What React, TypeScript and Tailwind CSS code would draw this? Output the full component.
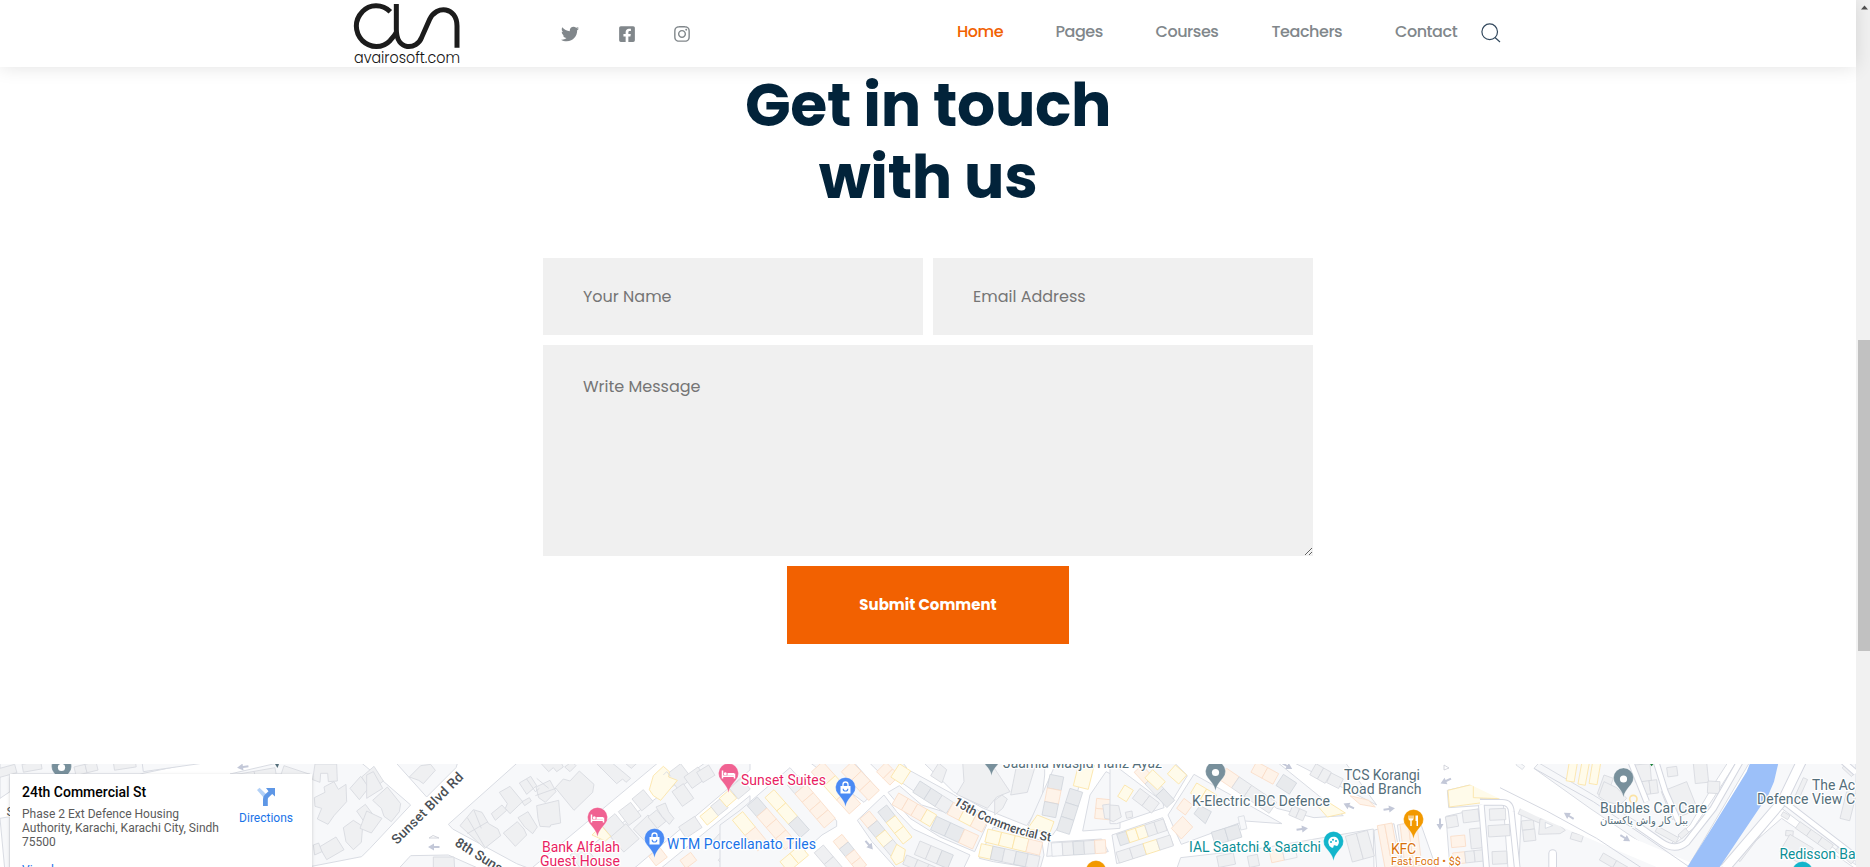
import React from "react";
import { FaTwitter, FaFacebookSquare, FaInstagram } from "react-icons/fa";

const tones: Record<string, [string, string]> = {
  g: ["#eff0f2", "#d6d9de"],
  b: ["#e8eaed", "#d0d5dc"],
  o: ["#fef3e9", "#fadcc6"],
  y: ["#fffbea", "#fbe3a4"],
  w: ["#f7f8fa", "#d9dce2"],
};

type Row = [number, number, number, number, number, string];
type Shape = [string, string];
type Tile = { x: number; blocks: string[]; rows: Row[]; shapes: Shape[] };

const tiles: Tile[] = [
  {
    x: 0,
    blocks: [
      "0,20 135,20 600,20 420,57 0,57",
      "0,57 30,57 30,110 0,130",
      "0,190 30,185 30,340 14,340",
      "426,20 640,20 430,50",
      "690,57 850,20 1080,20 1140,70 1232,150 1110,280 1085,305 930,335 930,57",
    ],
    rows: [
      [-8, 42, 44, 28, 26, "g"],
      [66, 28, 122, 18, 24, "g"],
      [222, 36, 288, 20, 26, "gg"],
      [340, 22, 405, 12, 24, "g"],
      [700, 60, 825, 38, 20, "gg"],
      [852, 32, 930, 58, 30, "g"],
    ],
    shapes: [
      ["g", "945,27 1010,27 1012,78 985,80 983,55 962,55 960,82 938,74"],
      ["g", "943,128 975,112 972,96 1002,80 1015,103 1038,88 1040,140 1002,182 984,208 952,192 965,160 945,154"],
      ["g", "1050,100 1082,64 1108,96 1078,134"],
      ["g", "1085,66 1122,34 1150,78 1112,108"],
      ["g", "1030,218 1060,196 1088,214 1084,262 1060,284 1038,260"],
      ["g", "958,276 1008,246 1032,284 980,314"],
      ["g", "1070,168 1096,148 1120,180 1092,200"],
      ["g", "940,270 956,264 966,290 944,300"],
    ],
  },
  {
    x: 370,
    blocks: [
      "75,20 170,126 258,38 264,20",
      "446,20 235,208 248,222 440,326 482,342 868,20",
      "566,342 1010,20 1140,20 1140,45 790,342",
      "870,342 1140,122 1140,342",
      "85,342 122,302 235,300 330,342",
    ],
    rows: [
      [600, 300, 640, 268, 60, "g"],
      [694, 210, 735, 176, 52, "g"],
      [745, 170, 782, 142, 52, "g"],
      [786, 132, 820, 104, 46, "g"],
      [890, 58, 932, 26, 56, "g"],
      [942, 66, 984, 36, 42, "g"],
      [980, 52, 1016, 30, 36, "g"],
      [722, 246, 768, 206, 60, "g"],
      [790, 222, 834, 180, 48, "g"],
      [834, 186, 860, 165, 44, "g"],
      [906, 110, 940, 86, 54, "g"],
      [990, 184, 1024, 156, 34, "y"],
      [1022, 154, 1052, 130, 36, "g"],
      [1048, 130, 1078, 104, 34, "y"],
      [1078, 100, 1114, 70, 42, "g"],
      [926, 216, 974, 184, 40, "g"],
      [836, 304, 870, 278, 36, "o"],
      [930, 316, 962, 292, 30, "o"],
      [1048, 236, 1086, 270, 26, "g"],
      [1086, 196, 1122, 168, 46, "y"],
      [1070, 290, 1110, 330, 36, "go"],
    ],
    shapes: [
      ["g", "-10,60 10,50 38,100 -10,130"],
      ["g", "8,136 52,96 92,146 88,170 64,200 42,184 34,160"],
      ["g", "-10,168 36,190 4,234 -30,220"],
      ["g", "118,66 152,32 182,28 196,46 160,86 146,76"],
      ["g", "510,22 536,50 550,38 560,50 580,36 572,20"],
      ["g", "584,36 600,50 618,32 606,20"],
      ["g", "556,98 580,72 600,78 628,48 672,88 668,112 612,166"],
      ["g", "674,20 740,86 758,72 768,82 782,70 722,20"],
      ["g", "760,20 784,40 806,20"],
      ["g", "388,112 420,94 458,140 420,176 406,160 412,146"],
      ["g", "448,84 482,64 500,92 470,118"],
      ["g", "498,96 540,76 558,110 526,142 506,128"],
      ["g", "364,176 396,150 410,166 376,196"],
      ["g", "456,140 478,128 484,138 464,152"],
      ["g", "500,152 566,136 572,204 542,210 540,216 510,214 504,190"],
      ["g", "270,212 310,164 336,172 356,206 384,222 392,242 344,280"],
      ["g", "400,234 442,200 462,222 470,240 436,274"],
      ["g", "444,188 474,170 502,216 488,236 464,216"],
      ["y", "838,104 850,62 880,34 898,50 896,66 922,76 872,136 850,122"],
      ["g", "858,156 886,144 896,170 912,190 898,208 876,184"],
      ["y", "666,240 694,212 722,244 706,258"],
      ["g", "190,306 252,306 254,342 190,342"],
    ],
  },
  {
    x: 740,
    blocks: [
      "0,166 150,38 290,198 290,214 246,240 180,300 130,342 -60,342 -60,210",
      "206,20 372,142 412,102 340,20",
      "385,20 450,84 500,38 486,20",
      "352,196 432,120 470,170 520,222 690,300 670,342 470,342 396,260",
      "444,112 478,92 545,150 740,210 704,290 600,246 510,190",
      "484,82 512,48 640,118 736,180 752,206 640,180 544,124",
      "548,20 640,110 730,160 860,212 905,140 914,60 914,20",
      "718,310 760,216 905,256 912,300 900,342 760,320",
      "862,218 950,20 1040,20 1000,150 938,240",
      "926,262 1085,252 1105,290 920,304",
      "1028,228 1050,120 1098,50 1140,70 1140,220",
    ],
    rows: [
      [102, 104, 208, 224, 36, "yyb"],
      [176, 62, 286, 190, 44, "goooo"],
      [52, 126, 166, 258, 40, "booo"],
      [8, 170, 84, 262, 40, "yo"],
      [248, 20, 362, 146, 46, "oyo"],
      [336, 20, 418, 106, 44, "ooo"],
      [438, 22, 478, 62, 40, "oo"],
      [388, 168, 482, 282, 36, "obyg"],
      [440, 150, 516, 246, 34, "byy"],
      [250, 270, 310, 340, 36, "gg"],
      [306, 238, 380, 330, 34, "oboo"],
      [486, 88, 512, 48, -40, "y"],
      [540, 78, 640, 142, 40, "bbg"],
      [640, 142, 744, 196, 40, "oyo"],
      [476, 114, 590, 180, 40, "oooy"],
      [590, 184, 716, 242, 44, "bbo"],
      [744, 222, 908, 262, 40, "yyyo"],
      [724, 266, 900, 304, 40, "ybgbg"],
      [934, 264, 1096, 254, 40, "wgbgo"],
      [990, 100, 950, 226, -40, "bbb"],
      [930, 58, 906, 180, -42, "bob"],
      [1018, 20, 1000, 92, -46, "y"],
      [540, 258, 640, 300, 44, "ggb"],
      [500, 300, 600, 342, 30, "ggg"],
      [1070, 130, 1064, 190, -50, "oo"],
      [120, 320, 180, 270, 40, "yy"],
    ],
    shapes: [
      ["g", "668,20 750,20 810,110 770,126 742,160 650,118 672,80"],
      ["g", "830,30 890,20 862,112 812,120"],
      ["g", "764,136 786,120 802,132 788,160 764,180"],
      ["y", "862,222 892,180 942,200 930,232"],
      ["g", "572,62 596,24 620,44 606,84"],
      ["y", "452,306 470,268 496,284 490,318 468,330"],
      ["g", "1088,150 1120,146 1150,160 1130,196 1094,190"],
    ],
  },
  {
    x: 1110,
    blocks: [
      "0,20 158,140 162,158 20,206 0,206",
      "70,20 190,132 232,62 190,20",
      "252,58 174,180 214,268 404,198 516,206",
      "6,240 158,188 190,270 20,326",
      "318,20 500,160 612,188 700,182 500,20",
      "546,20 800,150 704,20",
      "200,342 212,308 440,282 790,222 792,342",
      "792,226 852,206 878,342 800,342",
      "862,210 930,200 980,342 880,342",
      "1008,184 1140,154 1140,342 1020,342",
      "1012,106 1140,76 1140,150 1016,158",
    ],
    rows: [
      [96, 30, 194, 136, 32, "ogb"],
      [128, 44, 166, 80, 34, "y"],
      [196, 30, 230, 60, 36, "y"],
      [44, 90, 70, 106, 40, "y"],
      [90, 100, 148, 144, 38, "gg"],
      [260, 84, 320, 120, 36, "yy"],
      [350, 40, 500, 142, 40, "oggg"],
      [440, 20, 506, 56, 36, "oo"],
      [520, 58, 560, 84, 40, "b"],
      [618, 26, 664, 52, 38, "gg"],
      [664, 54, 700, 72, 32, "g"],
      [20, 238, 160, 192, 36, "byygg"],
      [18, 292, 180, 240, 34, "ggyg"],
      [304, 232, 384, 208, 40, "bb"],
      [384, 186, 402, 182, 40, "w"],
      [320, 304, 370, 294, 34, "g"],
      [412, 304, 442, 298, 34, "g"],
      [478, 288, 554, 272, 36, "ow"],
      [706, 244, 772, 226, 80, "gg"],
      [802, 212, 846, 204, 130, "oo"],
      [870, 208, 920, 202, 130, "oo"],
      [1006, 186, 1040, 180, 34, "g"],
      [1056, 168, 1104, 162, 36, "g"],
      [1022, 244, 1064, 240, 34, "o"],
      [1028, 294, 1064, 290, 34, "o"],
      [1078, 222, 1118, 218, 60, "g"],
      [1064, 290, 1120, 284, 34, "gg"],
      [548, 152, 590, 170, 30, "gg"],
    ],
    shapes: [
      ["o", "200,160 222,130 248,150 226,180"],
      ["o", "184,220 218,184 248,216 214,252"],
      ["b", "252,176 270,152 304,170 286,206"],
      ["g", "0,150 26,152 34,186 10,200 0,196"],
      ["g", "46,172 66,168 68,186 50,190"],
      ["y", "604,132 640,132 706,174 652,186"],
      ["o", "720,122 776,136 796,156 750,148"],
      ["y", "1014,106 1080,90 1140,88 1140,140 1018,156"],
    ],
  },
  {
    x: 1480,
    blocks: [
      "162,40 180,20 470,20 490,140 560,230 590,262 640,220 700,130 770,20 810,20 620,342 600,342 330,160",
      "170,20 340,120 470,200 570,270 630,210 700,90 745,20",
      "0,60 90,130 0,130",
      "126,136 200,170 340,240 560,342 116,342",
      "8,150 70,148 84,342 10,342",
      "895,20 860,120 700,342 730,342 905,160 960,20",
      "980,20 905,160 1128,330 1128,20",
      "905,190 730,342 1128,342",
    ],
    rows: [
      [268, 20, 292, 24, 58, "y"],
      [306, 20, 328, 24, 68, "y"],
      [338, 20, 362, 24, 66, "y"],
      [372, 60, 400, 70, 60, "g"],
      [462, 30, 510, 26, 52, "g"],
      [484, 80, 530, 74, 40, "gg"],
      [560, 38, 590, 34, 28, "g"],
      [544, 110, 620, 80, 90, "g"],
      [640, 26, 680, 22, 60, "g"],
      [684, 78, 720, 80, 36, "g"],
      [28, 162, 76, 160, 34, "g"],
      [24, 212, 88, 208, 34, "g"],
      [36, 290, 80, 288, 38, "g"],
      [124, 198, 160, 194, 28, "g"],
      [128, 226, 164, 222, 34, "g"],
      [130, 140, 200, 170, 40, "g"],
      [276, 232, 310, 242, 20, "g"],
      [370, 294, 450, 340, 24, "gg"],
      [534, 214, 596, 248, 18, "g"],
      [594, 240, 616, 220, 16, "g"],
      [906, 156, 780, 320, 22, "gg"],
      [1100, 110, 1080, 190, -30, "g"],
      [960, 200, 1060, 270, 24, "ggg"],
      [910, 170, 930, 182, 14, "g"],
      [918, 226, 940, 228, 16, "g"],
      [930, 238, 1000, 280, 60, "g"],
      [970, 68, 942, 130, -14, "g"],
      [1100, 24, 1128, 50, 20, "g"],
      [1080, 270, 1128, 310, 22, "gg"],
      [115, 20, 134, 34, 12, "w"],
    ],
    shapes: [
      ["y", "-20,80 10,92 88,122 80,132 -20,128"],
      ["g", "180,192 214,190 256,226 240,236 176,238"],
      ["g", "356,124 372,80 410,98 440,130 420,150 380,140"],
    ],
  },
];

function rowPolys([x1, y1, x2, y2, depth, codes]: Row) {
  const len = Math.hypot(x2 - x1, y2 - y1);
  const nx = (-(y2 - y1) / len) * depth;
  const ny = ((x2 - x1) / len) * depth;
  const n = codes.length;
  return codes.split("").map((c, i) => {
    const ax = x1 + ((x2 - x1) * i) / n;
    const ay = y1 + ((y2 - y1) * i) / n;
    const bx = x1 + ((x2 - x1) * (i + 1)) / n;
    const by = y1 + ((y2 - y1) * (i + 1)) / n;
    return [c, `${ax},${ay} ${bx},${by} ${bx + nx},${by + ny} ${ax + nx},${ay + ny}`] as Shape;
  });
}

function Pin({ x, y, color, children }: { x: number; y: number; color: string; children?: React.ReactNode }) {
  return (
    <g transform={`translate(${x} ${y})`}>
      <path d="M0 0C-1-6-4-8.500-7.500-13A10 10 0 1 1 7.500-13C4-8.500 1-6 0 0Z" fill={color} stroke="#fff" strokeOpacity=".6" strokeWidth=".5" />
      <g transform="translate(0 -18.500)">{children ?? <circle r="3.600" fill="#fff" />}</g>
    </g>
  );
}

const Bag = () => (
  <g>
    <path d="M-5-2.500H5V5H-5Z" fill="#fff" />
    <path d="M-2.500-2.500V-4A2.500 2.500 0 0 1 2.500-4V-2.500" fill="none" stroke="#fff" strokeWidth="1.300" />
    <path d="M-2.300.2A2.300 2.300 0 0 0 2.300.2" fill="none" stroke="#4a8af4" strokeWidth="1.200" />
  </g>
);

const Bed = () => (
  <g fill="none" stroke="#fff" strokeWidth="1.500">
    <path d="M-6-4V4M-6 1.800H6M6 4V-1" />
    <path d="M-1-1.500H5.500V1H-1Z" fill="#fff" stroke="none" />
    <circle cx="-3.200" cy="-.8" r="1.500" fill="#fff" stroke="none" />
  </g>
);

const Arrow = ({ x, y, r }: { x: number; y: number; r: number }) => (
  <path transform={`translate(${x} ${y}) rotate(${r})`} d="M-5.500-1H0V-3.500L6 0 0 3.500V1H-5.500Z" fill="#c3c8d8" />
);

type LabelProps = { x: number; y: number; w?: number; color: string; size?: number; children: string; mid?: boolean };
const Label = ({ x, y, w, color, size = 14, children, mid }: LabelProps) => (
  <text
    x={x}
    y={y}
    fill={color}
    fontSize={size}
    textLength={w}
    textAnchor={mid ? "middle" : "start"}
    stroke="#fff"
    strokeWidth="2.500"
    strokeLinejoin="round"
    paintOrder="stroke"
  >
    {children}
  </text>
);

function MapView() {
  return (
    <svg viewBox="0 764 1856 103" className="block h-[103px] w-[1856px] font-['Roboto',sans-serif]" aria-label="Map">
      <rect x="0" y="764" width="1856" height="103" fill="#fff" />
      {tiles.map((t) => (
        <g key={t.x} transform={`translate(${t.x} 755) scale(.33333)`} strokeWidth="2.500">
          {t.blocks.map((p, i) => (
            <polygon key={i} points={p} fill="#f7f8fa" stroke="#d9dce3" strokeWidth="3" />
          ))}
          {[...t.rows.flatMap(rowPolys), ...t.shapes].map(([c, p], i) => (
            <polygon key={i} points={p} fill={tones[c][0]} stroke={tones[c][1]} />
          ))}
        </g>
      ))}

      <g transform="translate(370 755) scale(.33333)" fill="none" stroke="#d6d9de" strokeWidth="2.500">
        <path d="M292 188L344 276M312 166L334 220M292 236L354 200M470 72L496 110 508 100M500 70L536 100 M496 122L558 100M880 60L890 50 902 64" />
      </g>
      <g transform="translate(1480 755) scale(.33333)" fill="none">
        <path d="M-30 60L180 160 630 350" stroke="#fff" strokeWidth="52" />
        <path d="M60 98L200 168 350 250 490 342M162 40L340 140 500 248 625 334" stroke="#d4d7e0" strokeWidth="3" />
        <path d="M780 20L700 160 620 262Q585 290 545 262L470 210" stroke="#d4d7e0" strokeWidth="22" />
        <path d="M780 20L700 160 620 262Q585 290 545 262L470 210" stroke="#fff" strokeWidth="16" />
        <path d="M452 20L500 140M528 20L556 110 600 210" stroke="#d4d7e0" strokeWidth="20" />
        <path d="M452 20L500 140M528 20L556 110 600 210" stroke="#fff" strokeWidth="14" />
        <path d="M0 142H66Q92 142 94 170L112 342M4 150L20 342" stroke="#d4d7e0" strokeWidth="20" />
        <path d="M0 142H66Q92 142 94 170L112 342M4 150L20 342" stroke="#fff" strokeWidth="14" />
        <path d="M218 342V296" stroke="#d4d7e0" strokeWidth="26" strokeLinecap="round" />
        <path d="M218 342V296" stroke="#fff" strokeWidth="20" strokeLinecap="round" />
        <path d="M964 20L906 140 735 340" stroke="#d4d7e0" strokeWidth="32" />
        <path d="M964 20L906 140 735 340" stroke="#fff" strokeWidth="26" />
        <path d="M912 140L1128 306M1090 20L1128 54" stroke="#d4d7e0" strokeWidth="20" />
        <path d="M912 140L1128 306M1090 20L1128 54" stroke="#fff" strokeWidth="14" />
        <path d="M812 20H896L882 80 866 118 715 342H618L700 212 800 50Z" fill="#9cc0f9" />
        <circle cx="460" cy="132" r="11" stroke="#fbe3a4" strokeWidth="5" />
        <path d="M196 202L218 212 196 220Z" stroke="#cfd3dc" strokeWidth="2" fill="#fff" />
        <path d="M510 27H520L515 34Z" fill="#188038" />
      </g>

      <Arrow x={243} y={767} r={172} />
      <Arrow x={434} y={847} r={180} />
      <Arrow x={869} y={845} r={50} />
      <Arrow x={1287} y={766} r={30} />
      <Arrow x={1349} y={806} r={205} />
      <Arrow x={1389} y={809} r={-8} />
      <Arrow x={1302} y={829} r={-8} />
      <Arrow x={1446} y={781} r={155} />
      <Arrow x={1440} y={824} r={90} />
      <Arrow x={1569} y={816} r={212} />
      <Arrow x={1625} y={838} r={32} />
      <path d="M429 838L433 835.500 439 838ZM1444 765L1449 768 1444 770Z" fill="#fff" stroke="#c9ccd4" strokeWidth=".8" />
      <path d="M275 764H279L277.500 768Z" fill="#546e7a" />

      <Pin x={61.500} y={786} color="#78909c" />
      <Pin x={991.500} y={776} color="#78909c" />
      <Pin x={1215.500} y={791} color="#78909c" />
      <Pin x={1623.500} y={797.500} color="#78909c" />
      <Pin x={728.500} y={793} color="#f06292"><Bed /></Pin>
      <Pin x={597.500} y={837} color="#f06292"><Bed /></Pin>
      <Pin x={845.500} y={807} color="#4a8af4"><Bag /></Pin>
      <Pin x={654.500} y={858} color="#4a8af4"><Bag /></Pin>
      <Pin x={1333.500} y={861} color="#12b5cb">
        <path d="M-5 1A5.300 5.300 0 1 1 4.500 2.500Q3.800 4 2 3 0 2 0 4 0 6-2 5A5 5 0 0 1-5 1" fill="#fff" />
        <g fill="#12b5cb"><circle cx="-2.500" cy="-.5" r="1" /><circle cx="-.5" cy="-2.800" r="1" /><circle cx="2.500" cy="-1.600" r="1" /></g>
      </Pin>
      <Pin x={1413.500} y={839} color="#f29900">
        <path d="M-5-5V-1.500Q-5 0-3.200 0V5.500H-1.800V0Q0 0 0-1.500V-5H-1V-2H-2V-5H-3V-2H-4V-5ZM2-5H4.500V5.500H3V.5H2Z" fill="#fff" />
      </Pin>
      <Pin x={1096} y={890} color="#f29900" />
      <Pin x={1802.500} y={891} color="#12b5cb" />

      <g stroke="#fff" strokeWidth="2.500" strokeLinejoin="round" paintOrder="stroke" fill="#4a4f55" fontWeight="500">
        <text transform="translate(397 845) rotate(-45)" fontSize="13.500" textLength="95" paintOrder="stroke">Sunset Blvd Rd</text>
        <text transform="translate(454 845) rotate(32)" fontSize="13.500" paintOrder="stroke">8th Sunset St</text>
        <path id="st15" d="M953 804Q1000 834 1053 842" fill="none" stroke="none" />
        <text fontSize="12.500" paintOrder="stroke"><textPath href="#st15" textLength="105">15th Commercial St</textPath></text>
        <text x="6.500" y="816" fontSize="13" fontWeight="400" paintOrder="stroke">S</text>
      </g>

      <Label x={741} y={784.500} w={85} color="#e91e63">Sunset Suites</Label>
      <Label x={581} y={852} w={78} color="#e91e63" mid>Bank Alfalah</Label>
      <Label x={580} y={866} w={80} color="#e91e63" mid>Guest House</Label>
      <Label x={667} y={849} w={149} color="#1a73e8">WTM Porcellanato Tiles</Label>
      <Label x={1003} y={767.500} w={159} color="#546e7a">Jaamia Masjid Hafiz Ayaz</Label>
      <Label x={1192} y={806} w={138} color="#546e7a">K-Electric IBC Defence</Label>
      <Label x={1382} y={780} w={76} color="#546e7a" mid>TCS Korangi</Label>
      <Label x={1382} y={794} w={79} color="#546e7a" mid>Road Branch</Label>
      <Label x={1189} y={852} w={132} color="#0b8f96">IAL Saatchi &amp; Saatchi</Label>
      <Label x={1391} y={854} w={25} color="#d9730d">KFC</Label>
      <Label x={1391} y={865} w={70} size={11} color="#d9730d">Fast Food • $$</Label>
      <Label x={1600} y={813} w={107} color="#546e7a">Bubbles Car Care</Label>
      <text x="1644" y="824" fontSize="10.500" fill="#546e7a" textAnchor="middle" direction="rtl" textLength="88" lengthAdjust="spacingAndGlyphs" stroke="#fff" strokeWidth="2" paintOrder="stroke" fontFamily="DejaVu Sans">ببل كار واش پاكستان</text>
      <Label x={1812} y={790} w={43} color="#546e7a">The Ac</Label>
      <Label x={1757} y={804} w={98} color="#546e7a">Defence View C</Label>
      <Label x={1779.500} y={859} w={76} color="#0b8f96">Redisson Ba</Label>
    </svg>
  );
}

function PlaceCard() {
  return (
    <div className="absolute left-[10px] top-[10px] flex h-[110px] w-[302px] justify-between bg-white pl-3 pr-[19px] pt-[9px] font-['Roboto',sans-serif] shadow-[0_1px_4px_-1px_rgba(0,0,0,0.3)]">
      <div className="w-[205px]">
        <div className="text-[14px] font-medium leading-[18px] text-black">24th Commercial St</div>
        <div className="mt-[6px] text-[12px] leading-[14px] text-[#5b5b5b]">
          Phase 2 Ext Defence Housing
          <br />
          Authority, Karachi, Karachi City, Sindh
          <br />
          75500
        </div>
        <div className="mt-[14px] text-[12px] leading-[14px] text-[#1a73e8]">View larger map</div>
      </div>
      <div className="flex flex-col items-center pt-[4px]">
        <svg viewBox="0 0 20 20" className="size-5">
          <path d="M1 3L3.500.8 10.500 7.500 8 11Z" fill="#b3d1f7" />
          <path d="M7 19V12Q7 9.500 8.800 7.800L12.500 4.200 10 1H19V9.500L16.200 7 12.500 10.500Q11.800 11.200 11.800 12.500V19Z" fill="#5e97e6" />
        </svg>
        <span className="mt-[4px] text-[12px] leading-[14px] text-[#1a73e8]">Directions</span>
      </div>
    </div>
  );
}

function Logo() {
  return (
    <div className="flex h-[67px] w-[108px] flex-col pt-px">
      <svg viewBox="70 3 324 147" className="h-[49px] w-[108px] shrink-0" fill="none" stroke="#1c1c1c" strokeWidth="15">
        <path d="M182 35C157 10 119 12 98 35C74 60 74 96 98 122C122 145 158 146 181 122Q199 101 200 96" />
        <path d="M200 12V88C200 155 262 150 276 112L300 58C320 14 382 20 382 78V143" />
      </svg>
      <svg viewBox="0 0 108 17" className="h-[17px] w-[108px] shrink-0 overflow-visible">
        <text x="1" y="13.300" fontSize="16" textLength="106" lengthAdjust="spacingAndGlyphs" fill="#111" className="font-['Poppins','Lato',sans-serif] font-light">avairosoft.com</text>
      </svg>
    </div>
  );
}

function Header() {
  return (
    <header className="relative z-10 flex h-[67px] w-full bg-white pl-[353px] shadow-[0_0_18px_rgba(0,0,0,0.12)]">
      <Logo />
      <div className="ml-[100px] flex items-start gap-[39px] pt-[25px] text-[18px] text-[#81878b]">
        <FaTwitter />
        <FaFacebookSquare />
        <FaInstagram className="-ml-[2px]" />
      </div>
      <nav className="ml-[266px] flex pt-[20px] text-[16px] font-medium leading-6 tracking-[-0.45px] text-[#81878b]">
        <a className="w-[98.500px] text-[#f16101]">Home</a>
        <a className="w-[100px]">Pages</a>
        <a className="w-[116px]">Courses</a>
        <a className="w-[123.500px]">Teachers</a>
        <a className="w-[86px]">Contact</a>
      </nav>
      <svg viewBox="0 0 20 20" className="mt-[23px] size-5" fill="none" stroke="#33495e" strokeWidth="1.200">
        <ellipse cx="8.700" cy="8.800" rx="7.800" ry="7.900" />
        <path d="M14 14.500L19 19" />
      </svg>
    </header>
  );
}

export default function App() {
  return (
    <div className="flex h-[867px] w-[1870px] overflow-hidden bg-white font-['Poppins','Inter',sans-serif]">
      <div className="flex w-[1856px] shrink-0 flex-col">
        <Header />
        <main className="flex h-[697px] flex-col items-center">
          <h1 className="pt-[2px] text-center text-[60px] font-bold leading-[72px] tracking-[-0.36px] text-[#02233a]">
            Get in touch
            <br />
            with us
          </h1>
          <form className="mt-[45px] grid w-[770px] grid-cols-2 gap-[10px]">
            <input placeholder="Your Name" className="h-[77px] bg-[#f0f0f0] px-10 text-[16px] outline-none placeholder:text-[#757575]" />
            <input placeholder="Email Address" className="h-[77px] bg-[#f0f0f0] px-10 text-[16px] outline-none placeholder:text-[#757575]" />
            <textarea placeholder="Write Message" className="col-span-2 block h-[211px] resize bg-[#f0f0f0] px-10 pt-[30px] text-[16px] leading-6 outline-none placeholder:text-[#757575]" />
            <button type="button" className="col-span-2 h-[78px] w-[282px] justify-self-center bg-[#f26101] text-[15px] font-bold text-white">
              Submit Comment
            </button>
          </form>
        </main>
        <section className="relative h-[103px] overflow-hidden">
          <MapView />
          <PlaceCard />
        </section>
      </div>
      <div className="flex w-[14px] flex-col bg-[#f1f1f1] pl-[2px]">
        <svg viewBox="0 0 12 17" className="h-[17px] w-3">
          <path d="M3 9.500L6.500 5.500 10 9.500Z" fill="#505050" />
        </svg>
        <div className="mt-[323px] h-[311px] bg-[#c1c1c1]" />
      </div>
    </div>
  );
}
